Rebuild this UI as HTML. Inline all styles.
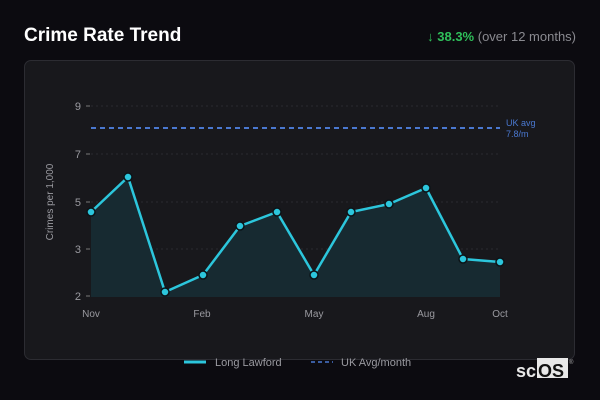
<!DOCTYPE html>
<html><head><style>
body{margin:0;width:600px;height:400px;background:#0c0b10;font-family:"Liberation Sans","DejaVu Sans",sans-serif;position:relative;overflow:hidden}
.t{position:absolute;left:24px;top:25px;color:#fff;font-weight:bold;font-size:19px}
.r{position:absolute;right:24px;top:29px;font-size:13px;color:#8a8a90}
.r b{color:#2fbf5a}
.card{position:absolute;left:24px;top:60px;width:551px;height:300px;border:1px solid #2c2c32;border-radius:7px;background:#18181c;box-sizing:border-box}
svg{position:absolute;left:0;top:0}
</style></head><body>
<div class="t">Crime Rate Trend</div>
<div class="r"><b>↓ 38.3%</b> (over 12 months)</div>
<div class="card"></div>
<svg width="600" height="400" font-family="Liberation Sans, DejaVu Sans, sans-serif">
<g stroke="#2a2a30" stroke-dasharray="2,3" stroke-width="1">
<line x1="91" y1="106" x2="500" y2="106"/><line x1="91" y1="154" x2="500" y2="154"/><line x1="91" y1="202" x2="500" y2="202"/><line x1="91" y1="249" x2="500" y2="249"/></g>
<g stroke="#777" stroke-width="1"><line x1="86" y1="106" x2="90" y2="106"/><line x1="86" y1="154" x2="90" y2="154"/><line x1="86" y1="202" x2="90" y2="202"/><line x1="86" y1="249" x2="90" y2="249"/><line x1="86" y1="296" x2="90" y2="296"/></g>
<g fill="#9a9aa0" font-size="11" text-anchor="end"><text x="81" y="110">9</text><text x="81" y="158">7</text><text x="81" y="206">5</text><text x="81" y="253">3</text><text x="81" y="300">2</text></g>
<text transform="translate(53,202) rotate(-90)" fill="#9a9aa0" font-size="10" text-anchor="middle">Crimes per 1,000</text>
<g fill="#9a9aa0" font-size="10" text-anchor="middle"><text x="91" y="317">Nov</text><text x="202" y="317">Feb</text><text x="314" y="317">May</text><text x="426" y="317">Aug</text><text x="500" y="317">Oct</text></g>
<path d="M91,212L128,177L165,292L203,275L240,226L277,212L314,275L351,212L389,204L426,188L463,259L500,262L500,297L91,297Z" fill="#172a31"/>
<line x1="91" y1="128" x2="500" y2="128" stroke="#4a78d0" stroke-width="2" stroke-dasharray="5,4"/>
<text x="506" y="126" fill="#4a78d0" font-size="9">UK avg</text><text x="506" y="137" fill="#4a78d0" font-size="9">7.8/m</text>
<polyline points="91,212 128,177 165,292 203,275 240,226 277,212 314,275 351,212 389,204 426,188 463,259 500,262" fill="none" stroke="#2cc6dc" stroke-width="2.5" stroke-linejoin="round"/>
<g fill="#2cc6dc" stroke="#0c1418" stroke-width="1.5"><circle cx="91" cy="212" r="4"/><circle cx="128" cy="177" r="4"/><circle cx="165" cy="292" r="4"/><circle cx="203" cy="275" r="4"/><circle cx="240" cy="226" r="4"/><circle cx="277" cy="212" r="4"/><circle cx="314" cy="275" r="4"/><circle cx="351" cy="212" r="4"/><circle cx="389" cy="204" r="4"/><circle cx="426" cy="188" r="4"/><circle cx="463" cy="259" r="4"/><circle cx="500" cy="262" r="4"/></g>
<line x1="184" y1="362" x2="206" y2="362" stroke="#2cc6dc" stroke-width="3"/>
<text x="215" y="366" fill="#9a9aa0" font-size="11">Long Lawford</text>
<line x1="311" y1="362" x2="333" y2="362" stroke="#4a78d0" stroke-width="1.5" stroke-dasharray="4,3"/>
<text x="341" y="366" fill="#9a9aa0" font-size="11">UK Avg/month</text>
<rect x="537" y="358" width="31" height="20" fill="#e8e8e8"/>
<text x="516" y="377" fill="#e8e8e8" font-size="18" font-weight="bold">sc</text>
<text x="538" y="377" fill="#111" font-size="18" font-weight="bold">OS</text>
<text x="569" y="364" fill="#aaa" font-size="6">®</text>
</svg>
</body></html>
